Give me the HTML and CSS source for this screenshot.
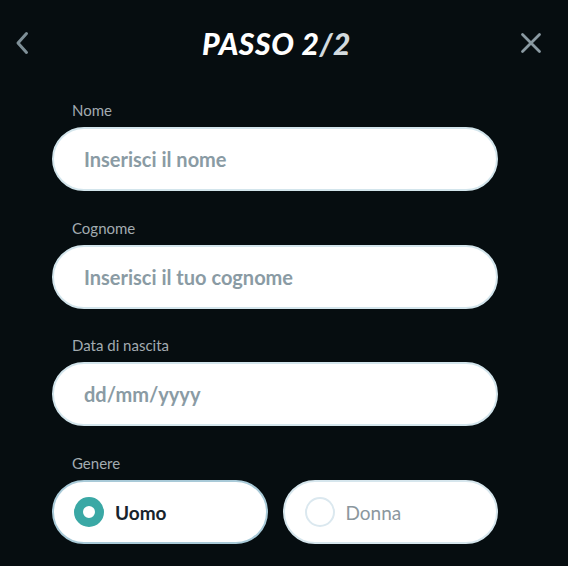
FILE: index.html
```html
<!DOCTYPE html>
<html lang="it">
<head>
<meta charset="utf-8">
<title>Passo 2/2</title>
<link rel="stylesheet" href="styles.css">
</head>
<body>
<div class="screen">
  <header class="header">
    <button class="icon-btn back" aria-label="Indietro">
      <svg width="14" height="24" viewBox="0 0 14 24"><path d="M11.5 2.5 L3 12 L11.5 21.5" fill="none" stroke="#7e8f97" stroke-width="3" stroke-linecap="round" stroke-linejoin="round"/></svg>
    </button>
    <h1 class="title">PASSO 2<span class="dim">/2</span></h1>
    <button class="icon-btn close" aria-label="Chiudi">
      <svg width="22" height="22" viewBox="0 0 22 22"><path d="M2.5 2.5 L19.5 19.5 M19.5 2.5 L2.5 19.5" fill="none" stroke="#8a9aa2" stroke-width="2.8" stroke-linecap="round"/></svg>
    </button>
  </header>
  <form class="form">
    <div class="field">
      <label class="label">Nome</label>
      <div class="input"><span class="placeholder">Inserisci il nome</span></div>
    </div>
    <div class="field">
      <label class="label">Cognome</label>
      <div class="input"><span class="placeholder">Inserisci il tuo cognome</span></div>
    </div>
    <div class="field">
      <label class="label">Data di nascita</label>
      <div class="input"><span class="placeholder">dd/mm/yyyy</span></div>
    </div>
    <div class="field">
      <label class="label">Genere</label>
      <div class="radios">
        <div class="radio selected"><span class="dot"></span><span class="rtext">Uomo</span></div>
        <div class="radio"><span class="dot"></span><span class="rtext">Donna</span></div>
      </div>
    </div>
  </form>
</div>
</body>
</html>
```
FILE: styles.css
```css
html, body {
  margin: 0;
  padding: 0;
  background: #060d10;
  font-family: "Lato", "Noto Sans", sans-serif;
}
.screen {
  width: 568px;
  height: 566px;
  overflow: hidden;
}
.header {
  height: 86px;
  display: flex;
  align-items: center;
  justify-content: space-between;
  padding: 0 25px 0 10px;
  box-sizing: border-box;
}
.icon-btn {
  background: none;
  border: 0;
  padding: 0;
  width: 24px;
  height: 24px;
  display: flex;
  align-items: center;
  justify-content: center;
}
.title {
  margin: 0;
  font-size: 30px;
  font-weight: 900;
  font-style: italic;
  color: #ffffff;
  letter-spacing: 0.6px;
}
.title .dim { color: #d2dade; }
.form {
  margin: 15px 0 0 52px;
  width: 446px;
  display: flex;
  flex-direction: column;
  gap: 27.7px;
}
.field {
  display: flex;
  flex-direction: column;
}
.label {
  font-size: 15px;
  line-height: 18px;
  color: #a2abb0;
  padding-left: 20px;
  margin-bottom: 8px;
}
.input {
  height: 64px;
  box-sizing: border-box;
  border: 2px solid #d3e5ec;
  border-radius: 32px;
  background: #ffffff;
  display: flex;
  align-items: center;
  padding-left: 30px;
}
.placeholder {
  font-size: 20px;
  font-weight: 700;
  color: #8a9ba4;
}
.radios {
  display: grid;
  grid-template-columns: 1fr 1fr;
  gap: 15px;
}
.radio {
  height: 64px;
  box-sizing: border-box;
  border: 2px solid #d6e6ed;
  border-radius: 32px;
  background: #ffffff;
  display: flex;
  align-items: center;
  padding-left: 20px;
  gap: 11px;
}
.radio.selected { border-color: #a9cad8; }
.dot {
  width: 30px;
  height: 30px;
  box-sizing: border-box;
  border-radius: 50%;
  border: 2px solid #dbe8ef;
  background: #fff;
}
.selected .dot {
  border: 9px solid #3aa8a5;
}
.rtext {
  font-size: 19px;
  color: #8b979e;
}
.selected .rtext {
  font-weight: 700;
  color: #17232c;
}
```
